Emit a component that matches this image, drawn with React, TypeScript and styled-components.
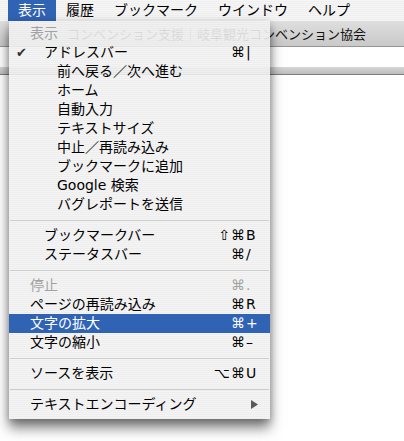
import React from 'react';
import styled, { createGlobalStyle } from 'styled-components';

const GlobalStyle = createGlobalStyle`
  html, body {
    margin: 0;
    padding: 0;
    background: #ffffff;
    overflow: hidden;
  }
`;

const UI_FONT = `"DejaVu Sans", "Noto Sans CJK JP", sans-serif`;

const Screen = styled.div`
  position: relative;
  width: 404px;
  height: 441px;
  overflow: hidden;
  font-family: ${UI_FONT};
  background: #ffffff;
`;

const MenuBar = styled.div`
  display: flex;
  align-items: stretch;
  height: 21px;
  padding-left: 8px;
  background: repeating-linear-gradient(to bottom, #f6f6f6 0 1px, #efefef 1px 2px);
`;

const MenuTitle = styled.div<{ $active?: boolean }>`
  padding: 0 10px;
  line-height: 21px;
  font-size: 14px;
  color: ${({ $active }) => ($active ? '#ffffff' : '#000000')};
  background: ${({ $active }) => ($active ? '#3163b5' : 'transparent')};
`;

const Window = styled.div`
  display: flex;
  flex-direction: column;
`;

const TitleBar = styled.div`
  display: flex;
  align-items: center;
  height: 25px;
  padding-left: 67px;
  background: linear-gradient(to bottom, #dedede, #c9c9c9);
  border-bottom: 1px solid #969696;
`;

const WindowTitle = styled.span`
  font-size: 13px;
  color: #111111;
  white-space: nowrap;
`;

const AddressArea = styled.div`
  height: 20px;
  background: #ffffff;
`;

const ToolbarBand = styled.div`
  height: 7px;
  background: linear-gradient(to bottom, #d6d6d6, #bdbdbd);
  border-bottom: 1px solid #7c7c7c;
`;

const Content = styled.div`
  height: 366px;
  background: #ffffff;
`;

const DropMenu = styled.div`
  position: absolute;
  top: 21px;
  left: 9px;
  width: 261px;
  padding: 3px 0 5px;
  background: repeating-linear-gradient(
    to bottom,
    rgba(243, 243, 243, 0.9) 0 1px,
    rgba(236, 236, 236, 0.9) 1px 2px
  );
  box-shadow: 0 9px 12px rgba(0, 0, 0, 0.5), 0 2px 7px rgba(0, 0, 0, 0.22);
`;

const Item = styled.div<{ $highlight?: boolean; $disabled?: boolean }>`
  display: grid;
  grid-template-columns: 21px 1fr auto 12px;
  align-items: center;
  height: 19px;
  padding-right: 12px;
  font-size: 14px;
  line-height: 19px;
  white-space: nowrap;
  color: ${({ $highlight, $disabled }) =>
    $highlight ? '#ffffff' : $disabled ? '#a2a2a2' : '#000000'};
  background: ${({ $highlight }) => ($highlight ? '#3163b5' : 'transparent')};
`;

const Check = styled.span`
  padding-left: 7px;
  font-size: 13px;
  color: #333333;
`;

const Label = styled.span<{ $indent: number }>`
  padding-left: ${({ $indent }) => $indent}px;
`;

const Modifiers = styled.span`
  text-align: right;
  font-family: "DejaVu Sans", sans-serif;
  font-size: 14px;
  letter-spacing: 1px;
`;

const Key = styled.span`
  display: flex;
  justify-content: flex-start;
  align-items: center;
  font-family: "DejaVu Sans", sans-serif;
  font-size: 14px;
`;

const SubArrow = styled.span`
  display: flex;
  justify-content: flex-end;
  align-items: center;
  width: 100%;
`;

const Separator = styled.div`
  height: 1px;
  margin: 6px 1px 5px;
  background: #cdcdcd;
`;

type Entry =
  | {
      label: string;
      indent: number;
      check?: boolean;
      mods?: string;
      keyChar?: string;
      disabled?: boolean;
      highlight?: boolean;
      submenu?: boolean;
    }
  | 'sep';

const menuBarTitles = ['表示', '履歴', 'ブックマーク', 'ウインドウ', 'ヘルプ'];

const entries: Entry[] = [
  { label: '表示', indent: 0, disabled: true },
  { label: 'アドレスバー', indent: 14, check: true, mods: '⌘', keyChar: '|' },
  { label: '前へ戻る／次へ進む', indent: 27 },
  { label: 'ホーム', indent: 27 },
  { label: '自動入力', indent: 27 },
  { label: 'テキストサイズ', indent: 27 },
  { label: '中止／再読み込み', indent: 27 },
  { label: 'ブックマークに追加', indent: 27 },
  { label: 'Google 検索', indent: 27 },
  { label: 'バグレポートを送信', indent: 27 },
  'sep',
  { label: 'ブックマークバー', indent: 14, mods: '⇧⌘', keyChar: 'B' },
  { label: 'ステータスバー', indent: 14, mods: '⌘', keyChar: '/' },
  'sep',
  { label: '停止', indent: 0, mods: '⌘', keyChar: '.', disabled: true },
  { label: 'ページの再読み込み', indent: 0, mods: '⌘', keyChar: 'R' },
  { label: '文字の拡大', indent: 0, mods: '⌘', keyChar: '+', highlight: true },
  { label: '文字の縮小', indent: 0, mods: '⌘', keyChar: '–' },
  'sep',
  { label: 'ソースを表示', indent: 0, mods: '⌥⌘', keyChar: 'U' },
  'sep',
  { label: 'テキストエンコーディング', indent: 0, submenu: true },
];

const App: React.FC = () => {
  return (
    <>
      <GlobalStyle />
      <Screen>
        <MenuBar>
          {menuBarTitles.map((t, i) => (
            <MenuTitle key={t} $active={i === 0}>
              {t}
            </MenuTitle>
          ))}
        </MenuBar>

        <Window>
          <TitleBar>
            <WindowTitle>コンベンション支援｜岐阜観光コンベンション協会</WindowTitle>
          </TitleBar>
          <AddressArea />
          <ToolbarBand />
          <Content />
        </Window>

        <DropMenu>
          {entries.map((e, i) =>
            e === 'sep' ? (
              <Separator key={i} />
            ) : (
              <Item key={i} $highlight={e.highlight} $disabled={e.disabled}>
                <Check>{e.check ? '✔' : ''}</Check>
                <Label $indent={e.indent}>{e.label}</Label>
                <Modifiers>{e.mods ?? ''}</Modifiers>
                {e.submenu ? (
                  <SubArrow>
                    <svg width="7" height="9" viewBox="0 0 7 9">
                      <path d="M0 0 L7 4.5 L0 9 Z" fill="#5a5a5a" />
                    </svg>
                  </SubArrow>
                ) : (
                  <Key>{e.keyChar ?? ''}</Key>
                )}
              </Item>
            )
          )}
        </DropMenu>
      </Screen>
    </>
  );
};

export default App;
